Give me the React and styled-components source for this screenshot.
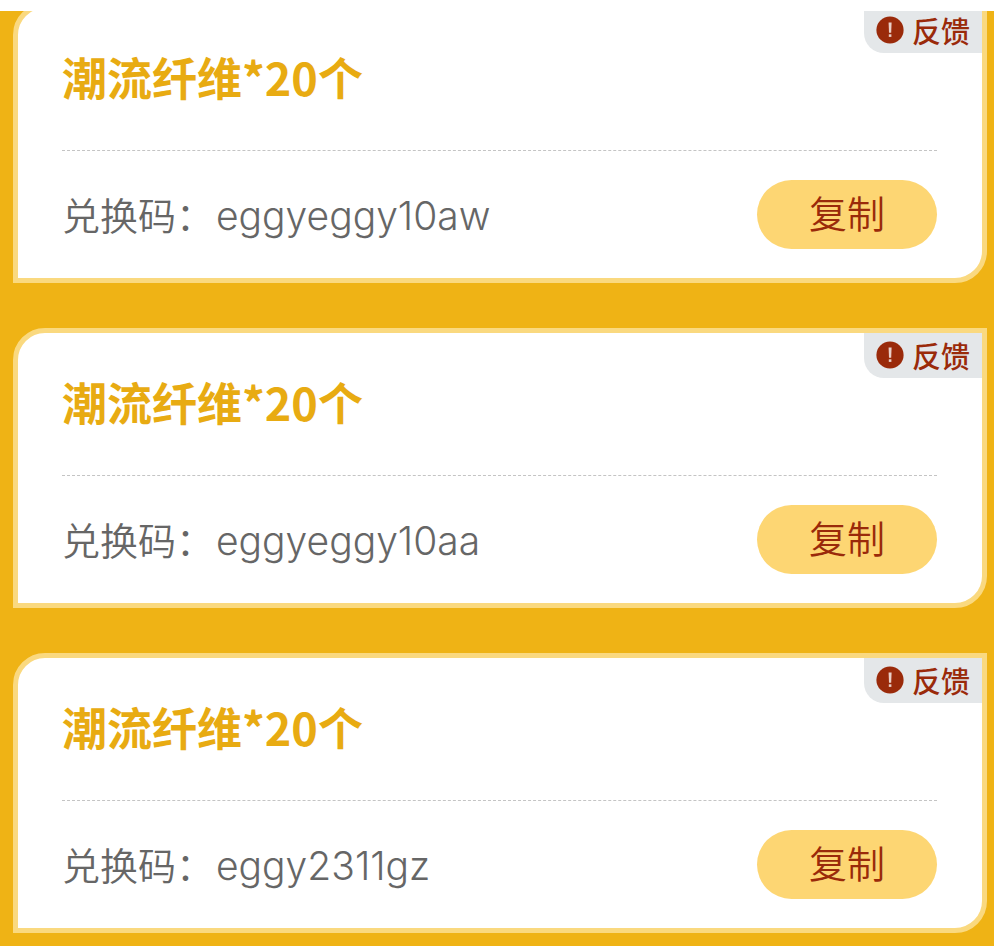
import React from 'react';
import styled, { createGlobalStyle } from 'styled-components';

const mainColor = '#efb315';
const borderColor = '#fad97f';
const darkRed = '#9a2a0a';

const GlobalStyle = createGlobalStyle`
    body {
        margin: 0;
        background: ${mainColor};
        font-family: 'Noto Sans CJK SC', sans-serif;
    }
`;

const TopBar = styled.header`
    position: sticky;
    top: 0;
    z-index: 1;
    height: 11px;
    background: white;
`;

const List = styled.main`
    display: flex;
    flex-direction: column;
    gap: 45px;
    margin-top: -8px;
    padding: 0 7px 13px 13px;
`;

const Card = styled.section`
    position: relative;
    padding: 0 45px 0 44px;
    background: white;
    border: 5px solid ${borderColor};
    border-radius: 32px 0 32px 0;
`;

const Title = styled.h2`
    margin: 0;
    padding: 39px 0 43px;
    border-bottom: 1px dashed #c4c4c4;
    color: #e8ab12;
    font-size: 45px;
    font-weight: 700;
    line-height: 60px;
`;

const CodeRow = styled.div`
    display: flex;
    align-items: center;
    justify-content: space-between;
    padding: 29px 0;
`;

const Code = styled.p`
    display: flex;
    align-items: baseline;
    gap: 2px;
    margin: 0;
    color: #666;
    font-size: 38px;
    font-weight: 350;
    line-height: 60px;
`;

const CodeValue = styled.span`
    font-family: Inter, sans-serif;
    font-size: 39px;
    font-weight: 300;
`;

const CopyButton = styled.button`
    width: 180px;
    height: 69px;
    padding: 0 0 6px;
    border: 0;
    border-radius: 35px;
    background: #fdd673;
    color: ${darkRed};
    font-family: inherit;
    font-size: 38px;
    font-weight: 350;
    line-height: 60px;
    cursor: pointer;
`;

const FeedbackButton = styled.button`
    position: absolute;
    top: 0;
    right: 0;
    display: flex;
    align-items: center;
    gap: 8px;
    height: 45px;
    padding: 0 12px 2px;
    border: 0;
    border-radius: 0 0 0 20px;
    background: #e4e7e9;
    color: ${darkRed};
    font-family: inherit;
    font-size: 29px;
    font-weight: 500;
    line-height: 40px;
    cursor: pointer;
`;

const AlertIcon = () => (
    <svg width="28" height="28" viewBox="0 0 28 28" aria-hidden="true">
        <circle cx="14" cy="14" r="13.6" fill={darkRed} />
        <path d="M12.6 6.5h3l-.4 10.2h-2.2z" fill="#e9cfc8" />
        <path d="M12.8 18.3h2.6v2.6h-2.6z" fill="#e9cfc8" />
    </svg>
);

const gifts = [
    { title: '潮流纤维*20个', code: 'eggyeggy10aw' },
    { title: '潮流纤维*20个', code: 'eggyeggy10aa' },
    { title: '潮流纤维*20个', code: 'eggy2311gz' },
];

const App = () => {
    return (
        <>
            <GlobalStyle />
            <TopBar />
            <List lang="zh-CN">
                {gifts.map(gift => (
                    <Card key={gift.code}>
                        <Title>{gift.title}</Title>
                        <CodeRow>
                            <Code>
                                <span>兑换码：</span>
                                <CodeValue>{gift.code}</CodeValue>
                            </Code>
                            <CopyButton type="button">复制</CopyButton>
                        </CodeRow>
                        <FeedbackButton type="button">
                            <AlertIcon />
                            反馈
                        </FeedbackButton>
                    </Card>
                ))}
            </List>
        </>
    );
};

export default App;
